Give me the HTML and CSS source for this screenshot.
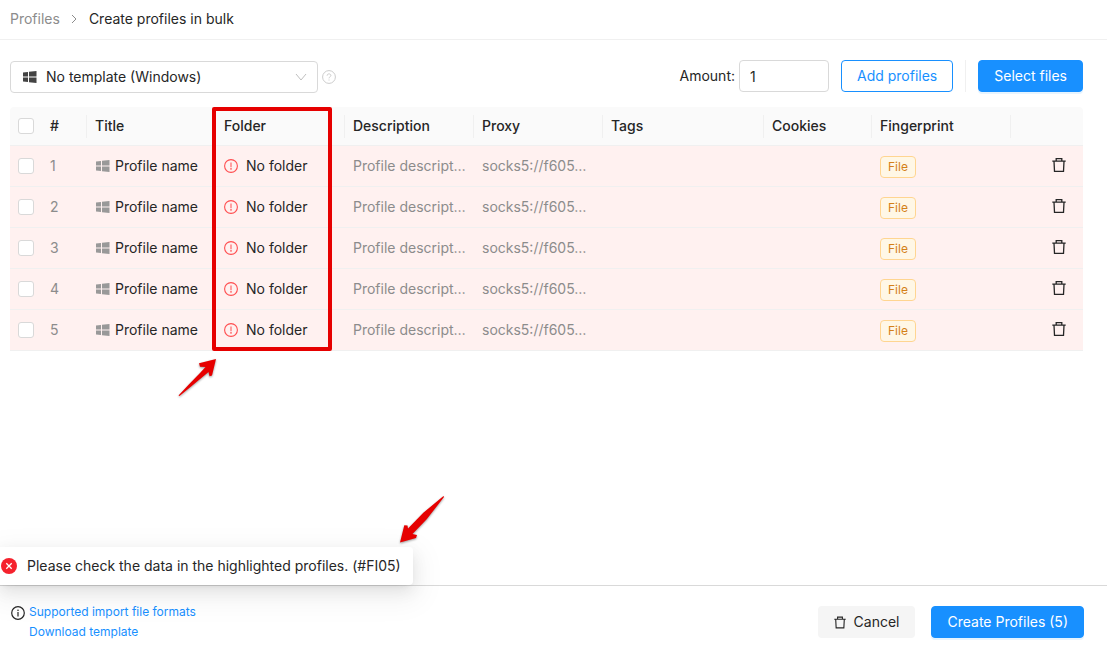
FILE: index.html
```
<!DOCTYPE html>
<html lang="en">
<head>
<meta charset="utf-8">
<title>Create profiles in bulk</title>
<link rel="stylesheet" href="styles.css">
</head>
<body>
<svg class="sprite" aria-hidden="true">
  <symbol id="windows" viewBox="0 0 14 12">
    <path d="M0 1.6 5 1v4.6H0zM6 .8 13.5 0v5.6H6zM0 6.5h5V11L0 10.5zM6 6.5h7.500V12L6 11.200z"/>
  </symbol>
  <symbol id="trash" viewBox="0 0 14 14">
    <path d="M4.200 3V.7h5.600V3M.3 3.200h13.400M2 3.200l.5 10.100h9L12 3.200" fill="none" stroke="currentColor" stroke-width="1.300"/>
  </symbol>
  <symbol id="alert" viewBox="0 0 14 14">
    <circle cx="7" cy="7" r="6.400" fill="none" stroke="currentColor" stroke-width="1.100"/>
    <path d="M6.500 3.500h1v4.700h-1z"/><circle cx="7" cy="9.900" r=".8"/>
  </symbol>
</svg>

<header class="header">
  <nav class="crumbs" aria-label="Breadcrumb">
    <a class="crumb-link" href="#">Profiles</a>
    <svg class="crumb-arrow" viewBox="0 0 6 10"><path d="M1 1l4 4-4 4"/></svg>
    <span>Create profiles in bulk</span>
  </nav>
</header>

<main class="content">
  <div class="toolbar">
    <div class="template">
      <div class="select-box">
        <svg class="select-os"><use href="#windows"/></svg>
        <select class="select" aria-label="Template"><option>No template (Windows)</option></select>
        <svg class="select-arrow" viewBox="0 0 12 8"><path d="M1 1l5 6 5-6"/></svg>
      </div>
      <svg class="help" viewBox="0 0 14 14"><circle cx="7" cy="7" r="6.400"/><path d="M5.100 5.700C5.100 4.500 5.900 3.900 7 3.900s1.900.7 1.900 1.600C8.900 6.800 7 6.800 7 8.300M7 9.500v1"/></svg>
    </div>
    <div class="actions">
      <label class="amount-label" for="amount">Amount:</label>
      <input class="amount" id="amount" type="text" inputmode="numeric" value="1">
      <button class="btn btn-outline" type="button">Add profiles</button>
      <span class="divider"></span>
      <button class="btn btn-primary" type="button">Select files</button>
    </div>
  </div>

  <table class="table">
    <colgroup>
      <col class="c-check"><col class="c-num"><col class="c-mid"><col class="c-mid"><col class="c-mid"><col class="c-mid"><col class="c-tags"><col class="c-cookies"><col class="c-print"><col class="c-action">
    </colgroup>
    <thead>
      <tr>
        <th class="check-cell"><input class="check" type="checkbox" aria-label="Select all"></th>
        <th class="split">#</th><th class="split">Title</th><th class="split">Folder</th><th class="split">Description</th><th class="split">Proxy</th><th class="split">Tags</th><th class="split">Cookies</th><th class="split">Fingerprint</th><th></th>
      </tr>
    </thead>
    <tbody>
      <tr>
        <td class="check-cell"><input class="check" type="checkbox" aria-label="Select profile 1"></td>
        <td class="muted">1</td>
        <td><span class="name"><svg class="os"><use href="#windows"/></svg>Profile name</span></td>
        <td><span class="folder"><svg class="alert"><use href="#alert"/></svg>No folder</span></td>
        <td class="muted">Profile descript…</td><td class="muted">socks5://f605…</td><td></td><td></td>
        <td><span class="tag">File</span></td>
        <td class="action-cell"><button class="icon-btn" type="button" aria-label="Delete profile 1"><svg class="trash"><use href="#trash"/></svg></button></td>
      </tr>
      <tr>
        <td class="check-cell"><input class="check" type="checkbox" aria-label="Select profile 2"></td>
        <td class="muted">2</td>
        <td><span class="name"><svg class="os"><use href="#windows"/></svg>Profile name</span></td>
        <td><span class="folder"><svg class="alert"><use href="#alert"/></svg>No folder</span></td>
        <td class="muted">Profile descript…</td><td class="muted">socks5://f605…</td><td></td><td></td>
        <td><span class="tag">File</span></td>
        <td class="action-cell"><button class="icon-btn" type="button" aria-label="Delete profile 2"><svg class="trash"><use href="#trash"/></svg></button></td>
      </tr>
      <tr>
        <td class="check-cell"><input class="check" type="checkbox" aria-label="Select profile 3"></td>
        <td class="muted">3</td>
        <td><span class="name"><svg class="os"><use href="#windows"/></svg>Profile name</span></td>
        <td><span class="folder"><svg class="alert"><use href="#alert"/></svg>No folder</span></td>
        <td class="muted">Profile descript…</td><td class="muted">socks5://f605…</td><td></td><td></td>
        <td><span class="tag">File</span></td>
        <td class="action-cell"><button class="icon-btn" type="button" aria-label="Delete profile 3"><svg class="trash"><use href="#trash"/></svg></button></td>
      </tr>
      <tr>
        <td class="check-cell"><input class="check" type="checkbox" aria-label="Select profile 4"></td>
        <td class="muted">4</td>
        <td><span class="name"><svg class="os"><use href="#windows"/></svg>Profile name</span></td>
        <td><span class="folder"><svg class="alert"><use href="#alert"/></svg>No folder</span></td>
        <td class="muted">Profile descript…</td><td class="muted">socks5://f605…</td><td></td><td></td>
        <td><span class="tag">File</span></td>
        <td class="action-cell"><button class="icon-btn" type="button" aria-label="Delete profile 4"><svg class="trash"><use href="#trash"/></svg></button></td>
      </tr>
      <tr>
        <td class="check-cell"><input class="check" type="checkbox" aria-label="Select profile 5"></td>
        <td class="muted">5</td>
        <td><span class="name"><svg class="os"><use href="#windows"/></svg>Profile name</span></td>
        <td><span class="folder"><svg class="alert"><use href="#alert"/></svg>No folder</span></td>
        <td class="muted">Profile descript…</td><td class="muted">socks5://f605…</td><td></td><td></td>
        <td><span class="tag">File</span></td>
        <td class="action-cell"><button class="icon-btn" type="button" aria-label="Delete profile 5"><svg class="trash"><use href="#trash"/></svg></button></td>
      </tr>
    </tbody>
  </table>
</main>

<footer class="footer">
  <div class="help-links">
    <svg class="info" viewBox="0 0 14 14"><circle cx="7" cy="7" r="6.300" fill="none" stroke="currentColor" stroke-width="1.200"/><path d="M6.400 6h1.200v4.500H6.400z"/><circle cx="7" cy="4.200" r=".8"/></svg>
    <div class="link-list">
      <a class="link" href="#">Supported import file formats</a>
      <a class="link" href="#">Download template</a>
    </div>
  </div>
  <div class="footer-actions">
    <button class="btn btn-text" type="button"><svg class="trash trash-small"><use href="#trash"/></svg>Cancel</button>
    <button class="btn btn-primary" type="button">Create Profiles (5)</button>
  </div>
</footer>

<div class="message" role="alert">
  <svg class="message-icon" viewBox="0 0 16 16"><circle cx="8" cy="8" r="8" fill="#f5222d"/><path d="M5.300 5.300l5.400 5.400M10.700 5.300l-5.400 5.400" stroke="#fff" stroke-width="1.300"/></svg>
  <span>Please check the data in the highlighted profiles. (#FI05)</span>
</div>

<div class="mark-box"></div>
<svg class="mark-arrow mark-arrow-up" viewBox="0 0 40 40"><path d="M38 1 21 5.300 22 8.800 27.500 9 22 15Q12 25 .5 37.500L1.500 38 13.700 28 30.500 14 31.500 18.300 34 17.500z"/></svg>
<svg class="mark-arrow mark-arrow-down" viewBox="0 0 46 48"><path d="M44.500 1 24.300 17.700 9 33.500 8.500 30.500 5.300 30.300 1 47.500 17 43 18 40 13.500 39 27.700 24.300 45 2z"/></svg>
</body>
</html>
```
FILE: styles.css
```
* { box-sizing: border-box; }

body {
  position: relative;
  display: flex;
  flex-direction: column;
  min-height: 100vh;
  margin: 0;
  background: #fff;
  color: #262626;
  font: 14px/22px Inter, "Liberation Sans", sans-serif;
}

svg { display: block; flex: none; fill: currentColor; }
.sprite { position: absolute; width: 0; height: 0; }
a { text-decoration: none; }
button, input, select { font: inherit; color: inherit; }

.header {
  padding: 8px 10px 9px;
  border-bottom: 1px solid #f0f0f0;
}
.crumbs { display: flex; align-items: center; }
.crumb-link { color: #8c8c8c; }
.crumb-arrow {
  width: 6px;
  height: 10px;
  margin: 0 12px 0 11px;
  fill: none;
  stroke: #8c8c8c;
}

.content { flex: 1; padding: 20px 24px 0 10px; }

.toolbar {
  display: flex;
  justify-content: space-between;
  align-items: flex-start;
  margin-bottom: 14px;
}
.template { display: flex; align-items: center; gap: 4px; }
.select-box { position: relative; width: 308px; margin-top: 1px; }
.select {
  display: block;
  width: 100%;
  height: 32px;
  padding: 0 32px 0 35px;
  border: 1px solid #d9d9d9;
  border-radius: 4px;
  background: #fff;
  appearance: none;
}
.select-os {
  position: absolute;
  left: 13px;
  top: 10px;
  width: 14px;
  height: 12px;
  color: #434343;
}
.select-arrow {
  position: absolute;
  right: 11px;
  top: 12px;
  width: 12px;
  height: 8px;
  fill: none;
  stroke: #bfbfbf;
}
.help { width: 14px; height: 14px; fill: none; stroke: #ccc; }

.actions { display: flex; align-items: center; }
.amount-label { margin-right: 4px; }
.amount {
  width: 90px;
  height: 32px;
  padding: 4px 10px;
  border: 1px solid #d9d9d9;
  border-radius: 4px;
}
.divider {
  width: 1px;
  height: 32px;
  margin: 0 12px;
  background: #f0f0f0;
}

.btn {
  display: flex;
  align-items: center;
  gap: 8px;
  height: 32px;
  padding: 0 15px;
  border: 1px solid transparent;
  border-radius: 4px;
  cursor: pointer;
}
.btn-outline { margin-left: 12px; border-color: #1890ff; background: #fff; color: #1890ff; }
.btn-primary { border-color: #1890ff; background: #1890ff; color: #fff; box-shadow: 0 2px 0 #e6f4ff; }
.btn-text { background: #f5f5f5; }

.table {
  width: 100%;
  table-layout: fixed;
  border-collapse: separate;
  border-spacing: 0;
}
.c-check { width: 32px; }
.c-num { width: 45px; }
.c-mid { width: 129px; }
.c-tags { width: 161px; }
.c-cookies { width: 108px; }
.c-print { width: 139px; }
.c-action { width: 72px; }

th, td {
  padding: 0 8px;
  border-bottom: 1px solid #f0f0f0;
  text-align: left;
  white-space: nowrap;
}
th {
  height: 39px;
  background: #fafafa;
  font-weight: 500;
}
th:first-child { border-top-left-radius: 4px; }
th:last-child { border-top-right-radius: 4px; }
td { height: 41px; background: #fff1f0; }
.split {
  background: linear-gradient(#f0f0f0, #f0f0f0) right center / 1px 23px no-repeat #fafafa;
}
.muted { color: #8c8c8c; }

.check {
  display: block;
  width: 16px;
  height: 16px;
  margin: 0;
  border: 1px solid #d9d9d9;
  border-radius: 3px;
  background: #fff;
  appearance: none;
}
.name { display: flex; align-items: center; gap: 5px; padding-left: 1px; }
.os { width: 14px; height: 12px; color: #999; }
.folder { display: flex; align-items: center; gap: 8px; }
.alert { width: 14px; height: 14px; color: #ff4d4f; }
.tag {
  display: inline-block;
  padding: 0 7px;
  border: 1px solid #ffd591;
  border-radius: 4px;
  background: #fff7e6;
  color: #d48019;
  font-size: 12px;
  line-height: 20px;
  vertical-align: middle;
}
.trash { width: 14px; height: 14px; }
.trash-small { width: 12px; height: 13px; }
.icon-btn {
  display: block;
  margin-left: auto;
  padding: 0;
  border: 0;
  background: none;
  cursor: pointer;
}
.action-cell { padding: 0 17px 2px 8px; }

.footer {
  display: flex;
  justify-content: space-between;
  align-items: center;
  padding: 16px 23px 11px 11px;
  border-top: 1px solid #d9d9d9;
}
.help-links { display: flex; gap: 4px; font-size: 12px; line-height: 20px; }
.info { width: 14px; height: 14px; margin-top: 4px; }
.link-list { display: flex; flex-direction: column; }
.link { color: #1890ff; }
.footer-actions { display: flex; gap: 16px; }

/* Toast overlapping the footer edge */
.message {
  position: absolute;
  left: 0;
  bottom: 68px;
  display: flex;
  align-items: center;
  gap: 10px;
  padding: 8px 12px 8px 1px;
  border-radius: 0 4px 4px 0;
  background: #fff;
  box-shadow: 0 3px 6px -4px rgba(0, 0, 0, .12), 0 6px 16px 0 rgba(0, 0, 0, .08), 0 9px 28px 8px rgba(0, 0, 0, .05);
}
.message-icon { width: 16px; height: 16px; }

/* Annotations drawn over the page */
.mark-box {
  position: absolute;
  left: 212px;
  top: 107px;
  width: 120px;
  height: 244px;
  border: 4px solid #e60000;
  border-radius: 2px;
  pointer-events: none;
}
.mark-arrow { position: absolute; fill: #e60000; pointer-events: none; filter: drop-shadow(0 1px 1px rgba(0, 0, 0, .4)); }
.mark-arrow-up { left: 178px; top: 358px; width: 40px; height: 40px; }
.mark-arrow-down { left: 399px; top: 495px; width: 46px; height: 48px; }
```
